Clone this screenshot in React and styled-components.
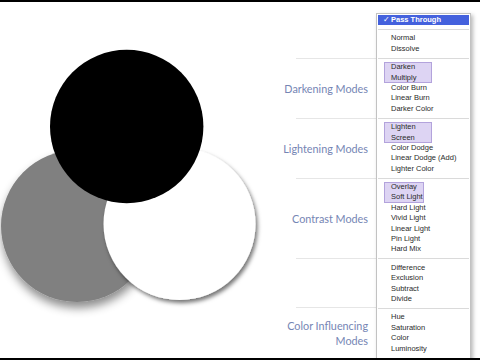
import React from 'react'
import styled, { createGlobalStyle } from 'styled-components'

const Global = createGlobalStyle`
  html, body { margin: 0; padding: 0; background: #fff; }
  * { box-sizing: border-box; }
`

const Frame = styled.div`
  width: 480px;
  height: 360px;
  border-top: 2px solid #000;
  border-bottom: 2px solid #000;
  display: flex;
  overflow: hidden;
  background: #fff;
`

const Canvas = styled.div`
  flex: 0 0 280px;
  height: 356px;
`

const Labels = styled.div`
  flex: 0 0 96px;
  min-width: 0;
  display: flex;
  flex-direction: column;
  padding-top: 56px;
`

const Section = styled.div`
  height: ${p => p.$h}px;
  margin-left: 16px;
  border-top: 1px solid #e6e6e6;
  display: flex;
  align-items: center;
  justify-content: flex-end;
  padding-right: 8px;
`

const Label = styled.div`
  font-family: Lato, "Open Sans", sans-serif;
  font-size: 10.8px;
  line-height: 15px;
  color: #7585b4;
  white-space: nowrap;
  text-align: right;
`

const MenuCol = styled.div`
  flex: 0 0 95px;
  min-width: 0;
  padding-top: 11px;
`

const Menu = styled.div`
  height: 400px;
  background: #fff;
  border: 1px solid #c2c2c2;
  box-shadow: 2px 2px 4px rgba(0, 0, 0, 0.28);
  padding: 1px;
  font-family: "Liberation Sans", Arial, sans-serif;
  font-size: 7.5px;
  color: #2a2a2a;
`

const Item = styled.div`
  height: 10.4px;
  line-height: 10.4px;
  padding-left: ${p => (p.$inset ? 7 : 13)}px;
  white-space: nowrap;
  ${p => p.$active && `
    background: #4461dd;
    color: #fff;
    font-weight: bold;
  `}
`

const Check = styled.span`
  display: inline-block;
  width: 8px;
  margin-left: -8px;
  font-weight: normal;
`

const Group = styled.div`
  margin-left: 6px;
  width: ${p => p.$w}px;
  background: #ddd4f3;
  box-shadow: inset 0 0 0 1px #b3a3dc;
`

const Sep = styled.div`
  height: 1px;
  margin: 3.5px 0;
  background: #dadada;
`

const groups = [
  { hi: null, items: ['Normal', 'Dissolve'] },
  { hi: { w: 48, items: ['Darken', 'Multiply'] }, items: ['Color Burn', 'Linear Burn', 'Darker Color'] },
  { hi: { w: 48, items: ['Lighten', 'Screen'] }, items: ['Color Dodge', 'Linear Dodge (Add)', 'Lighter Color'] },
  { hi: { w: 40, items: ['Overlay', 'Soft Light'] }, items: ['Hard Light', 'Vivid Light', 'Linear Light', 'Pin Light', 'Hard Mix'] },
  { hi: null, items: ['Difference', 'Exclusion', 'Subtract', 'Divide'] },
  { hi: null, items: ['Hue', 'Saturation', 'Color', 'Luminosity'] },
]

function Circles() {
  return (
    <svg width="280" height="356" viewBox="0 2 280 356">
      <defs>
        <filter id="soft" x="-30%" y="-30%" width="160%" height="170%">
          <feDropShadow dx="1" dy="6" stdDeviation="5" floodColor="#000" floodOpacity="0.45" />
        </filter>
        <filter id="hard" x="-30%" y="-30%" width="160%" height="170%">
          <feDropShadow dx="2" dy="3" stdDeviation="2" floodColor="#000" floodOpacity="0.55" />
        </filter>
      </defs>
      <circle cx="77" cy="226" r="76" fill="#808080" filter="url(#soft)" />
      <circle cx="179.5" cy="224" r="76" fill="#fff" filter="url(#hard)" />
      <circle cx="126.7" cy="126.5" r="76.7" fill="#000" />
    </svg>
  )
}

export default function App() {
  return (
    <>
      <Global />
      <Frame>
        <Canvas>
          <Circles />
        </Canvas>
        <Labels>
          <Section $h={60}><Label>Darkening Modes</Label></Section>
          <Section $h={60}><Label>Lightening Modes</Label></Section>
          <Section $h={80}><Label>Contrast Modes</Label></Section>
          <Section $h={49} />
          <Section $h={51}><Label>Color Influencing<br />Modes</Label></Section>
        </Labels>
        <MenuCol>
          <Menu>
            <Item $active><Check>✓</Check>Pass Through</Item>
            {groups.map((g, i) => (
              <React.Fragment key={i}>
                <Sep />
                {g.hi && (
                  <Group $w={g.hi.w}>
                    {g.hi.items.map(t => <Item key={t} $inset>{t}</Item>)}
                  </Group>
                )}
                {g.items.map(t => <Item key={t}>{t}</Item>)}
              </React.Fragment>
            ))}
          </Menu>
        </MenuCol>
      </Frame>
    </>
  )
}
